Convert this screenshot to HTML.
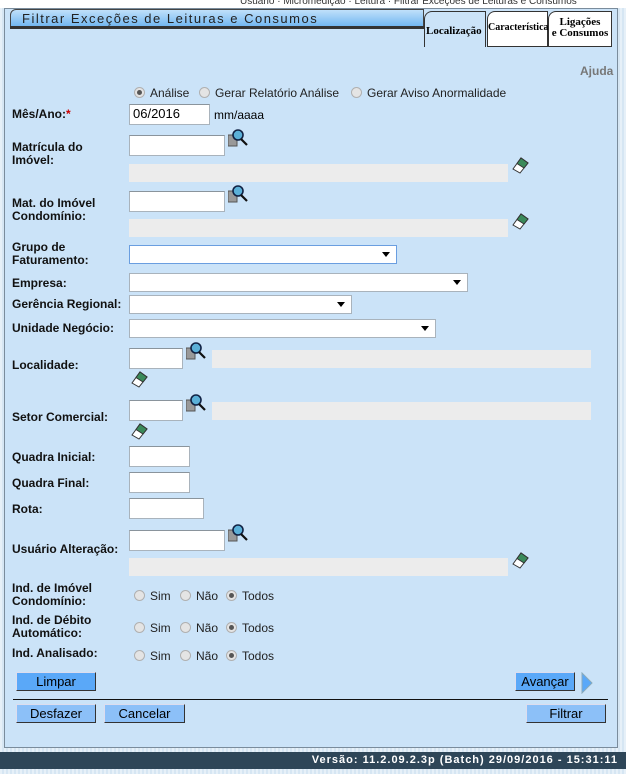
<!DOCTYPE html><html><head><meta charset="utf-8"><style>
*{margin:0;padding:0;box-sizing:border-box}
body{width:626px;height:774px;position:relative;overflow:hidden;font-family:"Liberation Sans",Arial,sans-serif;font-size:12px;color:#000;background:repeating-linear-gradient(90deg,#e6f0f8 0 2px,#d6e6f3 2px 4px)}
.a{position:absolute}
.panel{left:4px;top:8px;width:614px;height:740px;background:#cbe3f8;border:1px solid #7a8c9c}
.lbl{position:absolute;font-weight:bold;font-size:12px;line-height:13px;color:#111}
.in{position:absolute;height:21px;background:#fff;border:1px solid #a9b3bc;border-top-color:#8a949c}
.ro{position:absolute;height:18px;background:#ececec}
.sel{position:absolute;height:19px;background:#fff;border:1px solid #a9b3bc}
.sel:after{content:"";position:absolute;right:6px;top:6px;border:4px solid transparent;border-top:5px solid #000}
.btn{position:absolute;height:19px;background:#8cc0f8;border:1px solid #333;border-top-color:#dde;border-left-color:#dde;text-align:center;line-height:17px;font-size:13px}
.rad{display:inline-block;width:11px;height:11px;border-radius:50%;background:#e4e4e4;border:1px solid #b0b0b0;vertical-align:-1px;margin-right:5px;position:relative}
.rad.on:after{content:"";position:absolute;left:2px;top:2px;width:5px;height:5px;border-radius:50%;background:#555}
.rr{position:absolute;font-size:12px;color:#222;word-spacing:1px}
.rr span{margin-left:6px}
.rr span:first-child{margin-left:0}
</style></head><body>
<div class="a" style="left:0;top:0;width:626px;height:8px;background:#fff"></div>
<div class="a" style="left:240px;top:-4px;font-size:10px;color:#333">Usuário · Micromedição · Leitura · Filtrar Exceções de Leituras e Consumos</div>
<div class="a panel"></div>
<div class="a" style="left:10px;top:9px;width:414px;height:20px;background:linear-gradient(#c0e0fa,#6ab2f0);border:1px solid #444;border-radius:6px 0 0 0;"></div>
<div class="a" style="left:10px;top:26px;width:416px;height:3px;background:#333"></div>
<div class="a" style="left:22px;top:11px;font-size:13px;letter-spacing:1.5px;color:#222">Filtrar Exceções de Leituras e Consumos</div>
<div class="a" style="left:424px;top:11px;width:62px;height:36px;background:#cbe3f8;border:1px solid #333;border-bottom:none;border-radius:8px 0 0 0"></div>
<div class="a" style="left:426px;top:25px;font-weight:bold;font-size:11px;font-family:'Liberation Serif',serif">Localização</div>
<div class="a" style="left:487px;top:11px;width:61px;height:36px;background:#fff;border:1px solid #333;border-radius:8px 0 0 0"></div>
<div class="a" style="left:488px;top:22px;font-weight:bold;font-size:10px;font-family:'Liberation Serif',serif">Característica</div>
<div class="a" style="left:548px;top:11px;width:64px;height:36px;background:#fff;border:1px solid #333;border-radius:8px 0 0 0"></div>
<div class="a" style="left:550px;top:17px;width:60px;text-align:center;font-weight:bold;font-size:11px;line-height:11px;font-family:'Liberation Serif',serif">Ligações<br>e Consumos</div>
<div class="a" style="left:580px;top:64px;font-weight:bold;color:#777">Ajuda</div>
<div class="a" style="left:134px;top:86px;color:#222"><span class="rad on"></span>Análise</div>
<div class="a" style="left:199px;top:86px;color:#222"><span class="rad"></span>Gerar Relatório Análise</div>
<div class="a" style="left:351px;top:86px;color:#222"><span class="rad"></span>Gerar Aviso Anormalidade</div>

<div class="lbl" style="left:12px;top:108px">Mês/Ano:<span style="color:#c00">*</span></div>
<div class="in" style="left:129px;top:104px;width:81px;padding:1px 3px;font-size:13px">06/2016</div>
<div class="a" style="left:214px;top:108px">mm/aaaa</div>

<div class="lbl" style="left:12px;top:141px">Matrícula do<br>Imóvel:</div>
<div class="in" style="left:129px;top:135px;width:96px"></div>
<div class="ro" style="left:129px;top:164px;width:379px"></div>

<div class="lbl" style="left:12px;top:197px">Mat. do Imóvel<br>Condomínio:</div>
<div class="in" style="left:129px;top:191px;width:96px"></div>
<div class="ro" style="left:129px;top:219px;width:379px"></div>

<div class="lbl" style="left:12px;top:241px">Grupo de<br>Faturamento:</div>
<div class="sel" style="left:129px;top:245px;width:268px;border-color:#6a9ee0"></div>
<div class="lbl" style="left:12px;top:277px">Empresa:</div>
<div class="sel" style="left:129px;top:273px;width:339px"></div>
<div class="lbl" style="left:12px;top:298px">Gerência Regional:</div>
<div class="sel" style="left:129px;top:295px;width:223px"></div>
<div class="lbl" style="left:12px;top:322px">Unidade Negócio:</div>
<div class="sel" style="left:129px;top:319px;width:307px"></div>

<div class="lbl" style="left:12px;top:359px">Localidade:</div>
<div class="in" style="left:129px;top:348px;width:54px"></div>
<div class="ro" style="left:212px;top:350px;width:379px"></div>
<div class="lbl" style="left:12px;top:411px">Setor Comercial:</div>
<div class="in" style="left:129px;top:400px;width:54px"></div>
<div class="ro" style="left:212px;top:402px;width:379px"></div>

<div class="lbl" style="left:12px;top:451px">Quadra Inicial:</div>
<div class="in" style="left:129px;top:446px;width:61px"></div>
<div class="lbl" style="left:12px;top:477px">Quadra Final:</div>
<div class="in" style="left:129px;top:472px;width:61px"></div>
<div class="lbl" style="left:12px;top:503px">Rota:</div>
<div class="in" style="left:129px;top:498px;width:75px"></div>

<div class="lbl" style="left:12px;top:543px">Usuário Alteração:</div>
<div class="in" style="left:129px;top:530px;width:96px"></div>
<div class="ro" style="left:129px;top:558px;width:379px"></div>

<div class="lbl" style="left:12px;top:582px">Ind. de Imóvel<br>Condomínio:</div>
<div class="lbl" style="left:12px;top:614px">Ind. de Débito<br>Automático:</div>
<div class="lbl" style="left:12px;top:647px">Ind. Analisado:</div>
<div class="a" style="left:134px;top:589px;color:#222"><span class="rad"></span>Sim</div><div class="a" style="left:180px;top:589px;color:#222"><span class="rad"></span>Não</div><div class="a" style="left:226px;top:589px;color:#222"><span class="rad on"></span>Todos</div>
<div class="a" style="left:134px;top:621px;color:#222"><span class="rad"></span>Sim</div><div class="a" style="left:180px;top:621px;color:#222"><span class="rad"></span>Não</div><div class="a" style="left:226px;top:621px;color:#222"><span class="rad on"></span>Todos</div>
<div class="a" style="left:134px;top:649px;color:#222"><span class="rad"></span>Sim</div><div class="a" style="left:180px;top:649px;color:#222"><span class="rad"></span>Não</div><div class="a" style="left:226px;top:649px;color:#222"><span class="rad on"></span>Todos</div>

<div class="btn" style="left:16px;top:672px;width:80px;background:#5aa8f8">Limpar</div>
<div class="btn" style="left:515px;top:672px;width:60px;background:#5aa8f8">Avançar</div>
<svg class="a" style="left:580px;top:672px" width="14" height="22"><path d="M2 1 L12 11 L2 21 Z" fill="#5aa8f8" stroke="#8ab" stroke-width="1"/></svg>
<div class="a" style="left:13px;top:699px;width:595px;height:1px;background:#111"></div>
<div class="btn" style="left:16px;top:704px;width:80px">Desfazer</div>
<div class="btn" style="left:104px;top:704px;width:81px">Cancelar</div>
<div class="btn" style="left:526px;top:704px;width:80px">Filtrar</div>

<div class="a" style="left:0;top:752px;width:626px;height:17px;background:#2e4658"></div>
<div class="a" style="right:8px;top:754px;color:#fff;font-weight:bold;font-size:11px;letter-spacing:1px">Versão: 11.2.09.2.3p (Batch) 29/09/2016 - 15:31:11</div>

<svg width="0" height="0" style="position:absolute"><defs>
<g id="mg"><rect x="0" y="6" width="9" height="11" fill="#999" stroke="#555"/><circle cx="10" cy="6" r="5" fill="#5bb0d8" stroke="#124" stroke-width="1.6"/><path d="M13 10 L19 16" stroke="#111" stroke-width="2.2"/></g>
<g id="er"><path d="M2 14 L10 3 L17 8 L9 18 Z" fill="#fff" stroke="#333"/><path d="M6 8.5 L10 3 L17 8 L13 13 Z" fill="#3a8a5a" stroke="#333"/></g>
</defs></svg>
<svg class="a" style="left:228px;top:129px" width="22" height="20"><use href="#mg"/></svg>
<svg class="a" style="left:228px;top:185px" width="22" height="20"><use href="#mg"/></svg>
<svg class="a" style="left:186px;top:342px" width="22" height="20"><use href="#mg"/></svg>
<svg class="a" style="left:186px;top:394px" width="22" height="20"><use href="#mg"/></svg>
<svg class="a" style="left:228px;top:524px" width="22" height="20"><use href="#mg"/></svg>
<svg class="a" style="left:511px;top:155px" width="20" height="20"><use href="#er"/></svg>
<svg class="a" style="left:511px;top:211px" width="20" height="20"><use href="#er"/></svg>
<svg class="a" style="left:130px;top:369px" width="20" height="20"><use href="#er"/></svg>
<svg class="a" style="left:130px;top:421px" width="20" height="20"><use href="#er"/></svg>
<svg class="a" style="left:511px;top:550px" width="20" height="20"><use href="#er"/></svg>
</body></html>
